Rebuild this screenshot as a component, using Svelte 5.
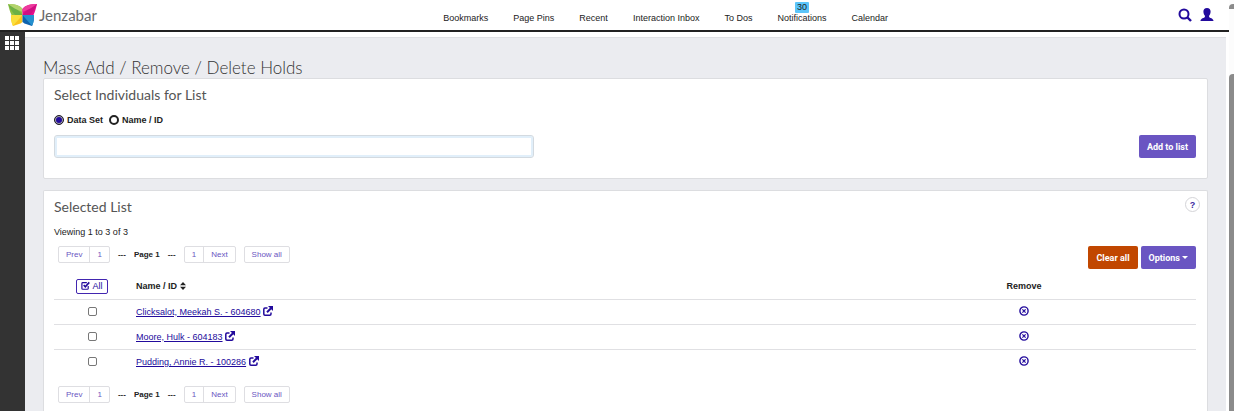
<script lang="ts">
  // Navigation
  const navItems = [
    { label: 'Bookmarks' },
    { label: 'Page Pins' },
    { label: 'Recent' },
    { label: 'Interaction Inbox' },
    { label: 'To Dos' },
    { label: 'Notifications', count: 30 },
    { label: 'Calendar' }
  ];

  // People on the list
  let people = $state([
    { id: '604680', name: 'Clicksalot, Meekah S.', checked: false },
    { id: '604183', name: 'Moore, Hulk', checked: false },
    { id: '100286', name: 'Pudding, Annie R.', checked: false }
  ]);

  let mode = $state('dataset');
  let search = $state('');

  function toggleAll() {
    const next = !people.every((p) => p.checked);
    people.forEach((p) => (p.checked = next));
  }

  function remove(id: string) {
    people = people.filter((p) => p.id !== id);
  }

  function clearAll() {
    people = [];
  }
</script>

{#snippet pager()}
  <div class="pager">
    <div class="pager-group">
      <button>Prev</button>
      <button>1</button>
    </div>
    <span class="dots">---</span>
    <strong>Page 1</strong>
    <span class="dots">---</span>
    <div class="pager-group">
      <button>1</button>
      <button>Next</button>
    </div>
    <div class="pager-group show-all">
      <button>Show all</button>
    </div>
  </div>
{/snippet}

<div class="page">
  <div class="app">
    <header class="topbar">
      <a class="brand" href="#home">
        <svg class="logo" viewBox="0 0 29 22" width="29" height="22" aria-hidden="true">
          <path d="M0 0C6 0 12 1 14.500 5V11H3.500C2 8 1 4 0 0Z" fill="#8dc044" />
          <path d="M0 0C6 3 11 6 14.500 11H7C4 8 2 4 0 0Z" fill="#6db045" />
          <path d="M0 0C6 0 12 1 14.500 5V8C9 6 4 3 0 0Z" fill="#b3d36c" />
          <path d="M29 0C23 0 17 1 14.500 5V11H25.500C27 8 28 4 29 0Z" fill="#e5108c" />
          <path d="M29 0C23 3 18 6 14.500 11H22C25 8 27 4 29 0Z" fill="#cf0f82" />
          <path d="M29 0C23 0 17 1 14.500 5V8C20 6 25 3 29 0Z" fill="#ec3a9d" />
          <path d="M3 11H14.500V18C13 19 12 20 11 20L5 22C3 18 3 14 3 11Z" fill="#f9c41f" />
          <path d="M3 11H14.500C12 14 8 18 5 22C3 18 3 14 3 11Z" fill="#fbdf3c" />
          <path d="M26 11H14.500V18C16 19 17 20 18 20L24 22C26 18 26 14 26 11Z" fill="#0e63ae" />
          <path d="M26 11H14.500C17 14 21 18 24 22C26 18 26 14 26 11Z" fill="#2490cf" />
        </svg>
        <span>Jenzabar</span>
      </a>

      <nav>
        {#each navItems as item}
          <a href="#nav">
            {item.label}
            {#if item.count}
              <span class="badge">{item.count}</span>
            {/if}
          </a>
        {/each}
      </nav>

      <div class="tools">
        <button title="Search">
          <svg viewBox="0 0 14 14" width="14" height="14" fill="none" stroke="currentColor">
            <circle cx="6" cy="6" r="4.500" stroke-width="2" />
            <path d="M9 9L13 13" stroke-width="2.400" />
          </svg>
        </button>
        <button title="Account">
          <svg viewBox="0 0 14 14" width="14" height="14" fill="currentColor">
            <path d="M7 0C9.300 0 10.700 1.600 10.600 3.800C10.500 5.800 9.800 7 9.100 7.700V9C9.500 10 13.500 10.300 13.500 13H0.500C0.500 10.300 4.500 10 4.900 9V7.700C4.200 7 3.500 5.800 3.400 3.800C3.300 1.600 4.700 0 7 0Z" />
          </svg>
        </button>
      </div>
    </header>

    <div class="body">
      <aside>
        <button title="Menu">
          <svg viewBox="0 0 14 14" width="14" height="14" fill="#fff">
            {#each [0, 5, 10] as y}
              {#each [0, 5, 10] as x}
                <rect {x} {y} width="4" height="4" />
              {/each}
            {/each}
          </svg>
        </button>
      </aside>

      <main>
        <h1>Mass Add / Remove / Delete Holds</h1>

        <section class="card">
          <h2>Select Individuals for List</h2>
          <div class="modes">
            <label><input type="radio" name="mode" value="dataset" bind:group={mode} />Data Set</label>
            <label><input type="radio" name="mode" value="name" bind:group={mode} />Name / ID</label>
          </div>
          <div class="search-row">
            <input type="text" aria-label="Data set" bind:value={search} />
            <button class="btn">Add to list</button>
          </div>
        </section>

        <section class="card selected">
          <div class="card-head">
            <h2>Selected List</h2>
            <button class="help" title="Help">?</button>
          </div>
          <p>Viewing 1 to 3 of 3</p>
          <div class="list-bar">
            {@render pager()}
            <div class="actions">
              <button class="btn danger" onclick={clearAll}>Clear all</button>
              <button class="btn">Options<span class="caret"></span></button>
            </div>
          </div>

          <table>
            <thead>
              <tr>
                <th class="col-check">
                  <button class="all" onclick={toggleAll}>
                    <svg viewBox="0 0 10 10" width="9" height="9" fill="none" stroke="currentColor">
                      <path d="M8 5.500V8.200Q8 9.200 7 9.200H2Q1 9.200 1 8.200V2.800Q1 1.800 2 1.800H6.500" stroke-width="1.300" />
                      <path d="M3 4.500L4.800 6.500L9.200 1.500" stroke-width="1.800" />
                    </svg>
                    All
                  </button>
                </th>
                <th class="col-name">
                  Name / ID
                  <svg viewBox="0 0 6 8" width="6" height="8" fill="currentColor">
                    <path d="M0 3.300L3 0L6 3.300ZM0 4.700L3 8L6 4.700Z" />
                  </svg>
                </th>
                <th class="col-remove">Remove</th>
              </tr>
            </thead>
            <tbody>
              {#each people as person (person.id)}
                <tr>
                  <td class="col-check">
                    <input type="checkbox" aria-label={person.name} bind:checked={person.checked} />
                  </td>
                  <td class="col-name">
                    <a href="#person">{person.name} - {person.id}</a>
                    <svg viewBox="0 0 10 10" width="10" height="10" fill="none" stroke="currentColor">
                      <path d="M4.500 2H2Q0.800 2 0.800 3.200V8Q0.800 9.200 2 9.200H6.800Q8 9.200 8 8V6.500" stroke-width="1.500" />
                      <path d="M4 6.200L8 2.200" stroke-width="2" />
                      <path d="M5 0H10V5Z" fill="currentColor" stroke="none" />
                    </svg>
                  </td>
                  <td class="col-remove">
                    <button class="remove" title="Remove" onclick={() => remove(person.id)}>
                      <svg viewBox="0 0 10 10" width="10" height="10" fill="none" stroke="currentColor">
                        <circle cx="5" cy="5" r="4.100" stroke-width="1.400" />
                        <path d="M3.400 3.400L6.600 6.600M6.600 3.400L3.400 6.600" stroke-width="1.200" />
                      </svg>
                    </button>
                  </td>
                </tr>
              {/each}
            </tbody>
          </table>

          {@render pager()}
        </section>
      </main>
    </div>
  </div>

  <div class="scrollbar">
    <span class="arrow"></span>
    <span class="thumb"></span>
  </div>
</div>

<style>
  :global(body) {
    margin: 0;
  }

  .page {
    display: flex;
    min-height: 100vh;
    background: #fff;
    color: #222;
    font: 9px/12px 'Liberation Sans', Arial, sans-serif;
  }

  .page * {
    box-sizing: border-box;
  }

  button {
    padding: 0;
    border: 0;
    background: none;
    color: inherit;
    font: inherit;
    cursor: pointer;
  }

  svg {
    display: block;
  }

  .app {
    flex: 1;
    display: flex;
    flex-direction: column;
  }

  /* Top bar */
  .topbar {
    display: grid;
    grid-template-columns: 13fr auto 10fr;
    align-items: center;
    height: 32px;
    border-bottom: 2px solid #222;
  }

  .brand {
    display: flex;
    align-items: center;
    gap: 2px;
    padding-left: 8px;
    color: #68696b;
    font: 15px/20px Lato, sans-serif;
    text-decoration: none;
  }

  nav {
    display: flex;
    gap: 25px;
    padding-top: 5px;
  }

  nav a {
    position: relative;
    color: #222;
    text-decoration: none;
  }

  .badge {
    position: absolute;
    left: 50%;
    bottom: 11px;
    transform: translateX(-50%);
    padding: 0 2px;
    border-radius: 1px;
    background: #5bc5fa;
    line-height: 11px;
  }

  .tools {
    display: flex;
    justify-content: flex-end;
    gap: 8px;
    padding-right: 15px;
    color: #220a9c;
  }

  /* Body */
  .body {
    flex: 1;
    display: flex;
  }

  aside {
    width: 25px;
    padding: 4px 5px;
    background: #333;
  }

  main {
    flex: 1;
    display: flex;
    flex-direction: column;
    margin: 5px 3px 0 0;
    padding: 20px 18px 0 18px;
    border-top: 1px solid #dfe0e4;
    background: #ebecf0;
  }

  h1,
  h2 {
    margin: 0;
    color: #333;
    font-family: Lato, sans-serif;
    font-weight: 300;
  }

  h1 {
    font-size: 17px;
    line-height: 20px;
  }

  h2 {
    color: #555;
    font-size: 14px;
    font-weight: 400;
    line-height: 16px;
  }

  .card {
    padding: 8px 11px 20px 10px;
    border: 1px solid #dcdde0;
    border-radius: 2px;
    background: #fff;
  }

  .modes {
    display: flex;
    gap: 6px;
    margin-top: 11px;
    font-weight: bold;
  }

  .modes label {
    display: flex;
    align-items: center;
    gap: 3px;
  }

  input[type='radio'] {
    appearance: none;
    width: 10px;
    height: 10px;
    margin: 0;
    border: 2px solid #222;
    border-radius: 50%;
    background: #fff;
  }

  input[type='radio']:checked {
    border-width: 1px;
    background: #220a9c;
    box-shadow: inset 0 0 0 1px #aaa;
  }

  .search-row {
    display: flex;
    justify-content: space-between;
    align-items: center;
    margin-top: 9px;
  }

  input[type='text'] {
    width: 480px;
    height: 23px;
    padding: 0 6px;
    border: 1px solid #d3dae0;
    border-radius: 3px;
    outline: none;
    box-shadow: inset 0 0 0 2px #e1effa;
    font: inherit;
  }

  .btn {
    height: 23px;
    padding: 0 8px;
    border-radius: 2px;
    background: #6a55c2;
    color: #fff;
    font-family: Roboto, sans-serif;
    font-weight: bold;
  }

  .btn.danger {
    background: #c14700;
  }

  .selected {
    flex: 1;
    margin-top: 11px;
    padding-bottom: 8px;
    border-bottom: 0;
    border-radius: 2px 2px 0 0;
  }

  .card-head {
    display: flex;
    justify-content: space-between;
  }

  .help {
    width: 15px;
    height: 15px;
    margin: -2px -4px 0 0;
    border: 1px solid #d4d4d8;
    border-radius: 50%;
    color: #3a2aa0;
    font-weight: bold;
  }

  p {
    margin: 11px 0 8px;
  }

  .list-bar {
    display: flex;
    justify-content: space-between;
  }

  .actions {
    display: flex;
    gap: 3px;
  }

  .caret {
    display: inline-block;
    margin: 0 0 2px 2px;
    border: 3px solid transparent;
    border-top-color: #fff;
    border-bottom: 0;
  }

  /* Pager */
  .pager {
    display: flex;
    align-items: center;
    align-self: flex-start;
    gap: 8px;
    padding-left: 4px;
  }

  .pager strong {
    font-size: 8px;
  }

  .pager-group {
    display: flex;
    border: 1px solid #dedee2;
    border-radius: 2px;
  }

  .pager-group button {
    height: 15px;
    padding: 0 7px;
    color: #6a55c2;
    font-size: 8px;
  }

  .pager-group button + button {
    border-left: 1px solid #dedee2;
  }

  .dots {
    font-weight: bold;
    font-size: 8px;
  }

  /* Table */
  table {
    width: 100%;
    margin: 5px 0 12px;
    border-collapse: collapse;
  }

  th,
  td {
    height: 25px;
    padding: 0;
    text-align: left;
  }

  tbody tr {
    border-top: 1px solid #e0e0e3;
  }

  th svg,
  td svg {
    display: inline-block;
    vertical-align: -1px;
  }

  .col-check {
    width: 76px;
    text-align: center;
  }

  .col-check input {
    appearance: none;
    display: block;
    width: 9px;
    height: 9px;
    margin: 0 auto;
    border: 1px solid #777;
    border-radius: 2px;
    background: #fff;
  }

  .col-name {
    padding-left: 6px;
  }

  .col-remove {
    width: 344px;
    text-align: center;
  }

  td {
    color: #220a9c;
  }

  td a {
    color: inherit;
  }

  .all {
    height: 15px;
    padding: 0 4px;
    border: 1px solid #4226b0;
    border-radius: 2px;
    color: #220a9c;
    font-weight: normal;
    line-height: 12px;
  }

  .remove {
    display: block;
    margin: 0 auto;
  }

  /* Scrollbar */
  .scrollbar {
    display: flex;
    flex-direction: column;
    width: 5px;
    padding-top: 4px;
    background: #fcfcfc;
  }

  .arrow {
    height: 5px;
    border-radius: 4px 0 0 0;
    background: #8b8b8b;
  }

  .thumb {
    flex: 1;
    margin-top: 65px;
    border-radius: 4px 0 0 0;
    background: #8b8b8b;
  }
</style>
